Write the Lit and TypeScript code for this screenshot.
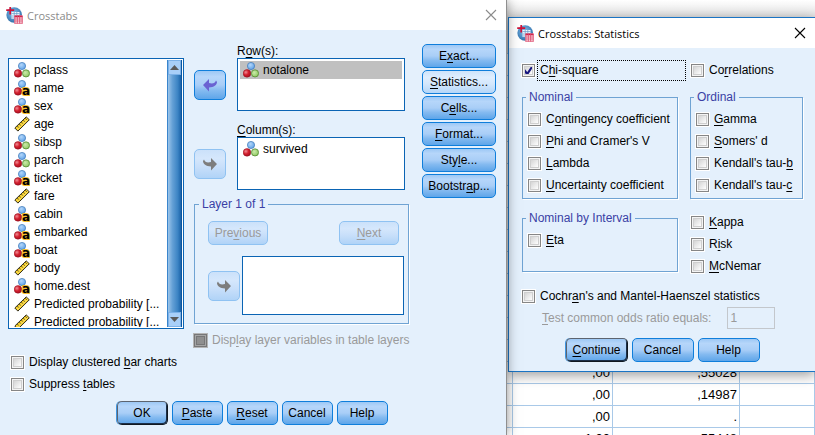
import { LitElement, html, css, svg, nothing } from "lit";
import { customElement, property } from "lit/decorators.js";
import { classMap } from "lit/directives/class-map.js";

type Measure = "nominal" | "string" | "scale";

// Turns "E&xact..." into text whose access key letter is underlined.
const mnemonic = (text: string) => {
  const at = text.indexOf("&");
  if (at < 0) return html`${text}`;
  return html`${text.slice(0, at)}<u>${text[at + 1]}</u>${text.slice(at + 2)}`;
};

const shared = css`
  * {
    box-sizing: border-box;
  }
  u {
    text-decoration: underline;
    text-underline-offset: 2px;
    text-decoration-thickness: 1px;
    text-decoration-skip-ink: none;
  }
  svg {
    display: block;
    flex: none;
  }
  .button {
    height: 24px;
    padding: 0;
    border: 1px solid #0f7edb;
    border-radius: 5px;
    background: linear-gradient(#9dc8f5, #b6d6fa 20%, #a9cef7 50%, #84baf0 70%, #5ea5e9);
    color: #000;
    font: inherit;
    text-align: center;
    white-space: nowrap;
  }
  .button.hot {
    background: linear-gradient(#cfe4fb, #dfeefe 30%, #d3e7fc 60%, #b4d6f8);
  }
  .button.default {
    border-color: #5c6470 #101820 #101820 #5c6470;
    box-shadow: -1px 0 0 #3d94e0, inset -1px -1px 0 #1b2f49;
  }
  .button:disabled {
    border-color: #8fc2f2;
    background: linear-gradient(#cbe1fa, #d5e7fc 30%, #c8dffa 60%, #b0d3f7);
    color: #9a9a9a;
  }
  .group {
    min-width: 0;
    margin: 0;
    border: 1px solid #6fa3d3;
    box-shadow: 1px 1px 0 #fff;
  }
  .group legend {
    height: 14px;
    margin-left: -2px;
    padding: 0 3px;
    color: #3a3fa5;
    line-height: 14px;
  }
`;

@customElement("app-mark")
export class AppMark extends LitElement {
  static styles = css`
    :host {
      display: block;
    }
    svg {
      display: block;
    }
  `;
  render() {
    return html`<svg width="17" height="17" viewBox="0 0 17 17" aria-hidden="true">
      <defs>
        <radialGradient id="g" cx="0.45" cy="0.4" r="0.65">
          <stop offset="0" stop-color="#8fbfe4" />
          <stop offset="0.6" stop-color="#4f8fc6" />
          <stop offset="1" stop-color="#2a669e" />
        </radialGradient>
      </defs>
      <circle cx="8.2" cy="8" r="7.8" fill="url(#g)" />
      <path d="M5.5 5h8v3h-5.500v4h-2.500z" fill="#f2f8fd" />
      <path d="M5.500 6.600h8M5.500 9h3M8.200 5v3M10.800 5v3M5.500 11h3" stroke="#5e96c8" stroke-width="0.7" />
      <path d="M4.200 0v7.600M0.200 3.200h8" stroke="#cf1238" stroke-width="1.7" />
      <rect x="8.4" y="8.400" width="8.2" height="8.2" fill="#fff" />
      <rect x="8.4" y="8.400" width="8.2" height="2" fill="#cf1c43" />
      <path
        d="M8.400 12h8.200M8.400 14h8.200M8.400 16.200h8.200M8.900 9v7.500M11.300 9v7.500M13.700 9v7.500M16.200 9v7.500"
        stroke="#dc4a6b"
        stroke-width="0.9"
      />
    </svg>`;
  }
}

@customElement("measure-icon")
export class MeasureIcon extends LitElement {
  @property() kind: Measure = "nominal";
  static styles = css`
    :host {
      display: block;
      flex: none;
    }
    svg {
      display: block;
    }
    .letter {
      font: bold 12px "DejaVu Sans", sans-serif;
      paint-order: stroke;
      stroke: #f7bf2e;
      stroke-width: 2px;
    }
  `;
  render() {
    if (this.kind === "scale")
      return html`<svg width="16" height="16" viewBox="0 0 16 16" aria-hidden="true">
        <path d="M0.8 12 12.2 0.9 15.3 3.8 3.9 15.1Z" fill="#f6cf2c" stroke="#1c1a10" stroke-width="0.9" />
        <path d="M3.200 13.300 13.600 3.200" stroke="#ffe97a" stroke-width="0.9" />
        <path
          d="M3.400 10.200l1.300 1.300M5.400 8.200l1.300 1.300M7.400 6.200l1.300 1.300M9.400 4.300l1.300 1.300M11.400 2.400l1.300 1.300"
          stroke="#1c1a10"
          stroke-width="0.8"
        />
      </svg>`;
    return html`<svg width="16" height="16" viewBox="0 0 16 16" aria-hidden="true">
      <defs>
        <radialGradient id="b" cx="0.4" cy="0.35" r="0.7">
          <stop offset="0" stop-color="#b4d7fa" />
          <stop offset="1" stop-color="#5b9fe6" />
        </radialGradient>
        <radialGradient id="r" cx="0.35" cy="0.35" r="0.7">
          <stop offset="0" stop-color="#f28b93" />
          <stop offset="0.5" stop-color="#d2202f" />
          <stop offset="1" stop-color="#a90f20" />
        </radialGradient>
        <radialGradient id="n" cx="0.4" cy="0.4" r="0.7">
          <stop offset="0" stop-color="#cbeaab" />
          <stop offset="1" stop-color="#86c455" />
        </radialGradient>
      </defs>
      <circle cx="8" cy="4" r="3.6" fill="url(#b)" stroke="#3f78b8" stroke-width="0.7" />
      <circle cx="4" cy="11.4" r="3.8" fill="url(#r)" stroke="#8f1220" stroke-width="0.5" />
      ${this.kind === "nominal"
        ? svg`<circle cx="12" cy="11.4" r="3.6" fill="url(#n)" stroke="#4c7f2c" stroke-width="0.7" />`
        : svg`<text class="letter" x="8" y="15">a</text>`}
    </svg>`;
  }
}

@customElement("tick-box")
export class TickBox extends LitElement {
  @property() label = "";
  @property({ type: Boolean }) checked = false;
  @property({ type: Boolean }) disabled = false;
  @property({ type: Boolean }) focused = false;
  static styles = [
    shared,
    css`
      :host {
        display: block;
      }
      .row {
        display: flex;
        align-items: center;
        gap: 2px;
        height: 22px;
        white-space: nowrap;
      }
      .box {
        appearance: none;
        flex: none;
        width: 13px;
        height: 13px;
        margin: 0;
        border: 1px solid #868686;
        outline: 1px solid #fff;
        background: linear-gradient(135deg, #c9c9c9, #fdfdfd 80%);
        box-shadow: inset 0 0 0 1px #f4f4f4, inset 0 0 0 2px #cfcfcf;
      }
      .box:checked {
        background: url("data:image/svg+xml,%3Csvg xmlns='http://www.w3.org/2000/svg' viewBox='0 0 11 11'%3E%3Cpath d='M1.2 5 4.2 9 9.6 1' fill='none' stroke='%2316167f' stroke-width='2.2'/%3E%3C/svg%3E"),
          linear-gradient(135deg, #c9c9c9, #fdfdfd 80%);
      }
      .box:disabled {
        border-color: #777;
        outline-color: #b5b5b5;
        background: #8f8f8f;
        box-shadow: inset 0 0 0 1px #a5a5a5, inset 0 0 0 2px #777;
      }
      .text {
        padding: 0 2px;
        line-height: 19px;
        border: 1px solid transparent;
      }
      .off {
        color: #9a9a9a;
      }
      .focused {
        flex: 1;
        border: 1px dotted #000;
      }
    `,
  ];
  render() {
    return html`<label class="row">
      <input class="box" type="checkbox" .checked=${this.checked} ?disabled=${this.disabled} />
      <span class=${classMap({ text: true, off: this.disabled, focused: this.focused })}>${mnemonic(this.label)}</span>
    </label>`;
  }
}

@customElement("dialog-title")
export class DialogTitle extends LitElement {
  @property() label = "";
  @property({ type: Boolean }) active = false;
  static styles = css`
    :host {
      display: block;
      background: #fff;
    }
    .bar {
      display: flex;
      align-items: center;
      gap: 4px;
      height: 30px;
      padding: 0 9px 0 6px;
      color: #8b8b8b;
    }
    .active {
      padding-left: 8px;
      color: #000;
    }
    .label {
      flex: 1;
      margin: 0;
      font: 11px "Open Sans", "Noto Sans", sans-serif;
    }
    .close {
      padding: 0;
      border: 0;
      background: none;
      color: inherit;
    }
    .close svg {
      display: block;
    }
  `;
  render() {
    return html`<header class=${classMap({ bar: true, active: this.active })}>
      <app-mark></app-mark>
      <h1 class="label">${this.label}</h1>
      <button class="close" aria-label="Close">
        <svg width="12" height="12" viewBox="0 0 12 12">
          <path d="M1 1 11 11M11 1 1 11" stroke="currentColor" stroke-width="1.1" />
        </svg>
      </button>
    </header>`;
  }
}

const VARIABLES: [string, Measure][] = [
  ["pclass", "nominal"],
  ["name", "string"],
  ["sex", "string"],
  ["age", "scale"],
  ["sibsp", "nominal"],
  ["parch", "nominal"],
  ["ticket", "string"],
  ["fare", "scale"],
  ["cabin", "string"],
  ["embarked", "string"],
  ["boat", "string"],
  ["body", "scale"],
  ["home.dest", "string"],
  ["Predicted probability [...", "scale"],
  ["Predicted probability [...", "scale"],
];

@customElement("crosstabs-dialog")
export class CrosstabsDialog extends LitElement {
  static styles = [
    shared,
    css`
      :host {
        display: block;
        background: #e4f0fc;
      }
      .body {
        padding: 14px 10px 10px 8px;
      }
      .columns {
        display: grid;
        grid-template-columns: minmax(0, 176fr) minmax(0, 218fr) 74px;
        column-gap: 10px;
      }
      .list {
        margin: 0;
        padding: 2px;
        border: 1px solid #0a64b4;
        background: #fff;
        list-style: none;
        overflow: hidden;
      }
      .source {
        display: flex;
        height: 271px;
        margin-top: 14px;
        padding: 1px 1px 1px 0;
        border: 1px solid #0a64b4;
        background: #fff;
      }
      .variables {
        flex: 1;
        min-width: 0;
        margin: 0;
        padding: 1px 0 0 5px;
        list-style: none;
        overflow: hidden;
      }
      .item {
        display: flex;
        align-items: center;
        gap: 4px;
        height: 18px;
        white-space: nowrap;
      }
      .target .item {
        padding-left: 3px;
      }
      .target .selected {
        background: #c0c0c0;
      }
      .scroll {
        display: flex;
        flex-direction: column;
        justify-content: space-between;
        width: 15px;
        border-left: 1px solid #3a85cc;
        border-right: 1px solid #0a56a0;
        background: linear-gradient(90deg, #9cc5ea, #64a0d6 35%, #3c84c4 75%, #1c64aa);
      }
      .step {
        display: grid;
        place-items: center;
        height: 15px;
        padding: 0;
        border: 1px solid #7db2e8;
        background: #a8cff8;
      }
      .middle {
        display: flex;
        flex-direction: column;
      }
      .pick {
        display: grid;
        grid-template-columns: 32px 1fr;
        column-gap: 11px;
        align-items: center;
        margin: 0 7px 12px 0;
      }
      .pick:nth-child(2) {
        margin-bottom: 7px;
      }
      .caption {
        grid-column: 2;
        height: 14px;
        line-height: 14px;
      }
      .move {
        display: grid;
        place-items: center;
        width: 32px;
        height: 30px;
        color: #6a62d2;
      }
      .move:disabled {
        color: #7d7d7d;
      }
      .target {
        height: 53px;
      }
      .layer {
        margin-right: 3px;
        padding: 10px 4px 8px 13px;
      }
      .layer legend {
        margin-left: -9px;
      }
      .pager {
        display: flex;
        justify-content: space-between;
        margin-right: 5px;
      }
      .pager .button {
        width: 60px;
      }
      .nest {
        display: grid;
        grid-template-columns: 32px 1fr;
        column-gap: 2px;
        align-items: center;
        margin-top: 11px;
      }
      .nest .list {
        height: 59px;
      }
      .layers {
        margin-top: 5px;
      }
      .side {
        display: flex;
        flex-direction: column;
        gap: 2px;
      }
      .options {
        padding-left: 3px;
      }
      .actions {
        display: flex;
        justify-content: center;
        gap: 4px;
        margin-top: 6px;
      }
      .actions .button {
        width: 51px;
      }
    `,
  ];

  private arrow(back: boolean) {
    return html`<svg width="16" height="16" viewBox="0 0 16 16" aria-hidden="true">
      <path
        d=${back
          ? "M1 8 7 2V6C11 7 13 6 14 3.4L15 5C15 8 12 10.4 7 10.4V14.4Z"
          : "M15 8 9 2V6C5 7 3 6 2 3.4L1 5C1 8 4 10.4 9 10.4V14.4Z"}
        fill="currentColor"
      />
    </svg>`;
  }

  private item([name, kind]: [string, Measure], selected = false) {
    return html`<li class=${classMap({ item: true, selected })} role="option" aria-selected=${String(selected)}>
      <measure-icon kind=${kind}></measure-icon><span>${name}</span>
    </li>`;
  }

  private picker(caption: string, name: string, active: boolean) {
    return html`<div class="pick">
      <span class="caption">${mnemonic(caption)}</span>
      <button class="button move" ?disabled=${!active} aria-label="Move variable">${this.arrow(active)}</button>
      <ul class="list target" role="listbox" aria-label=${caption.replace("&", "")}>
        ${this.item([name, "nominal"], active)}
      </ul>
    </div>`;
  }

  render() {
    return html`<dialog-title label="Crosstabs"></dialog-title>
      <div class="body">
        <div class="columns">
          <div class="source">
            <ul class="variables" role="listbox" aria-label="Variables">
              ${VARIABLES.map((v) => this.item(v))}
            </ul>
            <div class="scroll">
              <button class="step" aria-label="Scroll up">
                <svg width="9" height="5" viewBox="0 0 9 5"><path d="M0 5 4.5 0 9 5Z" fill="#5a5a5a" /></svg>
              </button>
              <button class="step" aria-label="Scroll down">
                <svg width="9" height="5" viewBox="0 0 9 5"><path d="M0 0 4.5 5 9 0Z" fill="#5a5a5a" /></svg>
              </button>
            </div>
          </div>
          <div class="middle">
            ${this.picker("R&ow(s):", "notalone", true)} ${this.picker("&Column(s):", "survived", false)}
            <fieldset class="group layer">
              <legend>Layer 1 of 1</legend>
              <div class="pager">
                <button class="button" disabled>${mnemonic("Pre&vious")}</button>
                <button class="button" disabled>${mnemonic("&Next")}</button>
              </div>
              <div class="nest">
                <button class="button move" disabled aria-label="Move variable">${this.arrow(false)}</button>
                <ul class="list" role="listbox" aria-label="Layer variables"></ul>
              </div>
            </fieldset>
            <tick-box class="layers" label="Disp&lay layer variables in table layers" disabled></tick-box>
          </div>
          <div class="side">
            ${["E&xact...", "&Statistics...", "C&ells...", "&Format...", "Sty&le...", "Bootstr&ap..."].map(
              (t, i) => html`<button class=${classMap({ button: true, hot: i === 1 })}>${mnemonic(t)}</button>`
            )}
          </div>
        </div>
        <div class="options">
          <tick-box label="Display clustered &bar charts"></tick-box>
          <tick-box label="Suppress &tables"></tick-box>
        </div>
        <div class="actions">
          ${["OK", "&Paste", "&Reset", "Cancel", "Help"].map(
            (t, i) => html`<button class=${classMap({ button: true, default: i === 0 })}>${mnemonic(t)}</button>`
          )}
        </div>
      </div>`;
  }
}

@customElement("statistics-dialog")
export class StatisticsDialog extends LitElement {
  static styles = [
    shared,
    css`
      :host {
        display: block;
        border: 1px solid #1a74c4;
        border-right: 0;
        background: #e4f0fc;
        box-shadow: 0 3px 12px rgba(0, 0, 0, 0.4);
      }
      .body {
        padding: 11px 12px 9px 13px;
      }
      .grid {
        display: grid;
        grid-template-columns: 156fr 113fr;
        column-gap: 12px;
        row-gap: 9px;
        align-items: start;
      }
      .grid > .group {
        padding: 4px 0 2px 5px;
      }
      .focus {
        margin-right: -8px;
      }
      .grid > .lower {
        min-height: 61px;
        margin-top: 3px;
      }
      .loose {
        padding-left: 1px;
      }
      .wide {
        margin-top: 8px;
      }
      .ratio {
        display: flex;
        align-items: center;
        gap: 16px;
        padding-left: 20px;
        color: #9a9a9a;
        white-space: nowrap;
      }
      .field {
        width: 48px;
        height: 22px;
        padding: 0 2px;
        border: 1px solid #c3c7cc;
        background: #e4f0fc;
        color: #9a9a9a;
        font: inherit;
      }
      .actions {
        display: flex;
        justify-content: center;
        gap: 4px;
        margin-top: 9px;
      }
      .actions .button {
        width: 62px;
      }
    `,
  ];
  private boxes(labels: string[]) {
    return labels.map((l) => html`<tick-box label=${l}></tick-box>`);
  }
  render() {
    return html`<dialog-title label="Crosstabs: Statistics" active></dialog-title>
      <div class="body">
        <div class="grid">
          <tick-box class="focus" label="C&hi-square" checked focused></tick-box>
          <tick-box class="loose" label="Co&rrelations"></tick-box>
          <fieldset class="group">
            <legend>Nominal</legend>
            ${this.boxes(["C&ontingency coefficient", "&Phi and Cramer's V", "&Lambda", "&Uncertainty coefficient"])}
          </fieldset>
          <fieldset class="group">
            <legend>Ordinal</legend>
            ${this.boxes(["&Gamma", "&Somers' d", "Kendall's tau-&b", "Kendall's tau-&c"])}
          </fieldset>
          <fieldset class="group lower">
            <legend>Nominal by Interval</legend>
            ${this.boxes(["&Eta"])}
          </fieldset>
          <div class="loose lower">${this.boxes(["&Kappa", "R&isk", "&McNemar"])}</div>
        </div>
        <tick-box class="wide" label="Cochr&an's and Mantel-Haenszel statistics"></tick-box>
        <div class="ratio">
          <label for="odds">${mnemonic("&Test common odds ratio equals:")}</label>
          <input class="field" id="odds" type="text" value="1" disabled />
        </div>
        <div class="actions">
          ${["&Continue", "Cancel", "Help"].map(
            (t, i) => html`<button class=${classMap({ button: true, default: i === 0 })}>${mnemonic(t)}</button>`
          )}
        </div>
      </div>`;
  }
}

const BLANK_ROWS = 14;
const ROWS: [string, string][] = [
  ...Array.from({ length: BLANK_ROWS }, (): [string, string] => ["", ""]),
  [",00", ",55028"],
  [",00", ",14987"],
  [",00", "."],
  ["1,00", ",55448"],
];

@customElement("app-root")
export class AppRoot extends LitElement {
  static styles = css`
    :host {
      display: grid;
      grid-template-columns: minmax(506px, 62%) minmax(0, 1fr);
      height: 100vh;
      overflow: hidden;
      font: 12px "Liberation Sans", Arial, sans-serif;
      color: #000;
    }
    crosstabs-dialog {
      z-index: 1;
      box-shadow: 1px 0 0 #8f8f8f, 0 0 12px rgba(0, 0, 0, 0.5);
    }
    .desktop {
      position: relative;
      min-width: 0;
      overflow: hidden;
      background: #fff;
    }
    .ribbon {
      height: 53px;
      background: linear-gradient(#fff, #e2e2e2 17px, #e2e2e2);
    }
    .sheet {
      width: 100%;
      border-collapse: collapse;
      table-layout: fixed;
      font-size: 13px;
    }
    .sheet td {
      box-sizing: border-box;
      height: 22px;
      padding: 0 2px;
      border: 1px solid #a9c9e8;
      text-align: right;
      line-height: 20px;
    }
    .head {
      width: 6px;
    }
    .first {
      width: 100px;
    }
    .second {
      width: 127px;
    }
    .window {
      position: absolute;
      top: 17px;
      left: 2px;
      right: 0;
    }
  `;
  render() {
    return html`<crosstabs-dialog></crosstabs-dialog>
      <main class="desktop">
        <div class="ribbon"></div>
        <table class="sheet">
          <colgroup>
            <col class="head" />
            <col class="first" />
            <col class="second" />
            <col />
          </colgroup>
          <tbody>
            ${ROWS.map(([a, b]) => html`<tr><td>${nothing}</td><td>${a}</td><td>${b}</td><td></td></tr>`)}
          </tbody>
        </table>
        <statistics-dialog class="window"></statistics-dialog>
      </main>`;
  }
}
